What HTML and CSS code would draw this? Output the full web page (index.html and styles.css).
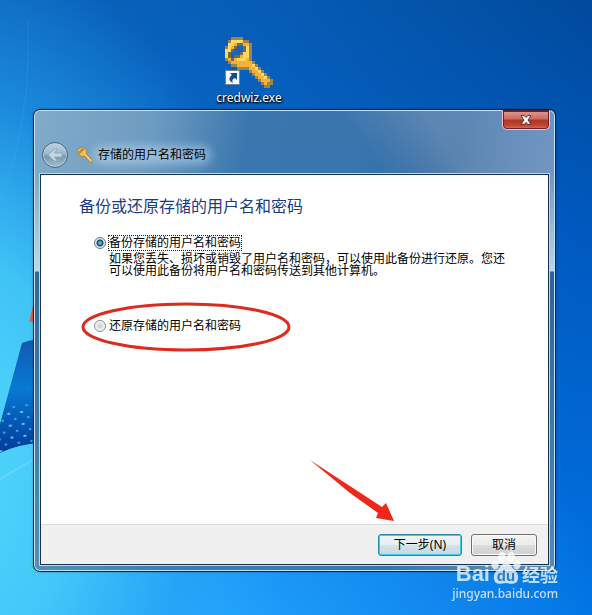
FILE: index.html
```html
<!DOCTYPE html>
<html lang="zh-CN">
<head>
  <meta charset="UTF-8">
  <meta name="viewport" content="width=device-width, initial-scale=1.0">
  <title>存储的用户名和密码</title>
  <link rel="stylesheet" href="styles.css">
</head>
<body>
  <div class="desktop">
    <!-- Wallpaper flag and light streaks -->
    <svg class="wallpaper" width="120" height="615" viewBox="0 0 120 615" aria-hidden="true">
      <defs>
        <linearGradient id="flag" x1="0" y1="0" x2="0" y2="1">
          <stop offset="0" stop-color="#1259ae"/>
          <stop offset="0.45" stop-color="#0879d2"/>
          <stop offset="1" stop-color="#003b96"/>
        </linearGradient>
        <pattern id="dots" width="13" height="12" patternUnits="userSpaceOnUse" patternTransform="rotate(-8)">
          <ellipse cx="3" cy="3" rx="1.7" ry="1" fill="#7dcaff"/>
          <ellipse cx="9" cy="9" rx="1.4" ry="0.9" fill="#57a9f0"/>
        </pattern>
      </defs>
      <path d="M28 20C30 90 22 150 -5 215" fill="none" stroke="#6cc4f5" stroke-opacity="0.15" stroke-width="1"/>
      <path d="M0 479L45 453" stroke="#9ae6ff" stroke-opacity="0.3" stroke-width="2"/>
      <path d="M29 322C32 311 35 296 41 284L50 284L44 320C39 321 34 321 29 322Z" fill="#e0603f"/>
      <path d="M22 343Q34 338 60 336L46 442Q18 444 0 453L0 424Z" fill="url(#flag)"/>
      <path d="M6 404L48 400L46 442Q18 444 0 453L0 424Z" fill="url(#dots)"/>
    </svg>

    <div class="shortcut">
      <svg width="52" height="52" viewBox="0 0 52 52" shape-rendering="crispEdges" aria-hidden="true">
        <!-- head and shaft, on a 3px grid -->
        <path fill="#a08348" d="M8 0h12v3h6v3h3v18h3v3h3v3h3v3h3v3h3v3h3v3h3v6h-3v3h-6v-3h-3v-3h-3v-3h-3v-3h-3v-3h-3v-3h-12v-3h-6v-3h-3v-3h-3v-15h3v-6h3z"/>
        <path fill="#f3b23a" d="M8 3h12v3h6v18h3v3h3v3h3v3h3v3h3v3h3v3h3v3h-3v3h-3v-3h-3v-3h-3v-3h-3v-3h-3v-3h-3v-3h-12v-3h-6v-3h-3v-15h3v-3h3z"/>
        <path fill="#ffd765" d="M8 3h12v3h-9v3h-3v6h-3v6h-3v-9h3v-6h3zM23 9h3v12h-3v3h-9v-3h6v-6h3zM29 27h3v3h3v3h3v3h3v3h3v3h-3v-3h-3v-3h-3v-3h-3v-3h-3z"/>
        <path fill="#7d6a3c" d="M14 6h6v3h3v6h-3v3h-3v3h-6v3h-3v-3h-3v-6h3v-3h3v-3h3z"/>
        <path fill="#1265bd" d="M14 9h6v6h-3v3h-6v3h-3v-6h3v-3h3z"/>
        <rect x="2" y="33" width="15" height="15" fill="#76818a"/>
        <rect x="3" y="34" width="13" height="13" fill="#f6fafc"/>
        <path shape-rendering="auto" fill="#174d8c" d="M7 36h7v7l-2-2c-3 1-3 3-2 5c-4-2-5-5-1-8z"/>
      </svg>
      <span class="shortcut-name">credwiz.exe</span>
    </div>

    <div class="window">
      <div class="titlebar">
        <button class="close-btn" type="button" aria-label="关闭">
          <svg width="12" height="10" viewBox="0 0 12 10" aria-hidden="true">
            <path d="M1 .7h3.3L6 2.6L7.7.7H11L8 5l3 4.3H7.7L6 7.4L4.3 9.3H1L4 5z" fill="#fff" stroke="#4d3441" stroke-width="1"/>
          </svg>
        </button>
        <button class="back-btn" type="button" aria-label="后退" disabled>
          <svg width="18" height="18" viewBox="0 0 18 18" aria-hidden="true">
            <path d="M2 9L8.5 3h3L8.5 7H16v4H8.5l3 4h-3z" fill="#c6d7e2" stroke="#8ba8bd" stroke-width="1"/>
          </svg>
        </button>
        <svg class="title-icon" width="16" height="16" viewBox="0 0 16 16" aria-hidden="true">
          <path fill="#f8c14e" stroke="#a8732d" stroke-width="0.8" fill-rule="evenodd" d="M3 .8h4l2.5 2.5v4l5.7 6l-.4 2h-1.5L8 9.4H4L.8 6.5V3zM4.5 2.5L2.4 4.6v2l3.2-2.7l1-1.4z"/>
          <path d="M9 8l5 5.5" stroke="#ffe49b" stroke-width="1"/>
        </svg>
        <span class="title-text">存储的用户名和密码</span>
      </div>

      <form class="page">
        <div class="page-body">
          <h1>备份或还原存储的用户名和密码</h1>
          <div class="option">
            <input type="radio" name="mode" id="backup" checked aria-describedby="backup-desc">
            <label class="focused" for="backup">备份存储的用户名和密码</label>
          </div>
          <p class="description" id="backup-desc">如果您丢失、损坏或销毁了用户名和密码，可以使用此备份进行还原。您还可以使用此备份将用户名和密码传送到其他计算机。</p>
          <div class="option">
            <input type="radio" name="mode" id="restore">
            <label for="restore">还原存储的用户名和密码</label>
            <svg class="ring" width="210" height="50" viewBox="0 0 210 50" aria-hidden="true">
              <ellipse cx="105" cy="25" rx="103" ry="23" fill="none" stroke="#dc2c20" stroke-width="3"/>
            </svg>
          </div>
        </div>
        <div class="page-footer">
          <svg class="arrow" width="86" height="63" viewBox="0 0 86 63" aria-hidden="true">
            <path d="M1 0L73 47L77 43L85 61L67 58L69 53L41 33Z" fill="#ef2718"/>
          </svg>
          <button class="btn btn-next" type="button">下一步(N)</button>
          <button class="btn btn-cancel" type="button">取消</button>
        </div>
      </form>
    </div>

    <div class="watermark">
      <div class="brand">
        <span class="brand-bai">Bai</span>
        <span class="paw">
          <svg width="32" height="34" viewBox="0 0 32 34" aria-hidden="true">
            <g fill="#fff">
              <ellipse cx="5" cy="14" rx="3.6" ry="4.6" transform="rotate(-12 5 14)"/>
              <ellipse cx="12" cy="6" rx="3.7" ry="5.2"/>
              <ellipse cx="21" cy="6" rx="3.7" ry="5.2" transform="rotate(8 21 6)"/>
              <ellipse cx="27" cy="14" rx="3.6" ry="4.6" transform="rotate(12 27 14)"/>
              <path d="M10 16C13 11 19 11 22 16C25 20 29 22 28 28C27 34 21 33 16 32C10 33 5 34 4 28C3 22 7 20 10 16Z"/>
            </g>
          </svg>
          <span class="paw-text">du</span>
        </span>
        <span class="brand-cn">经验</span>
      </div>
      <div class="site">jingyan.baidu.com</div>
    </div>
  </div>
</body>
</html>
```

FILE: styles.css
```css
* {
  box-sizing: border-box;
}

body {
  margin: 0;
  font-family: "Noto Sans", "Noto Sans CJK SC", sans-serif;
  font-size: 12px;
  color: #000;
}

button, input {
  font-family: inherit;
  font-size: inherit;
  margin: 0;
}

/* Desktop */
.desktop {
  position: relative;
  display: flex;
  flex-direction: column;
  min-height: 100vh;
  padding: 37px 36px 43px 33px;
  overflow: hidden;
  background:
    radial-gradient(ellipse 60% 85% at -10% 75%, #55dafc 0%, rgba(70, 205, 250, 0.9) 40%, rgba(45, 175, 245, 0.5) 70%, rgba(20, 130, 230, 0) 100%),
    radial-gradient(ellipse 70% 50% at 35% 105%, #22a4ff 0%, rgba(10, 130, 240, 0) 100%),
    linear-gradient(90deg, rgba(20, 125, 220, 0.5) 0%, rgba(15, 120, 220, 0.4) 45%, rgba(0, 60, 140, 0) 100%),
    linear-gradient(180deg, #004a9c 0%, #0058bc 35%, #0072e4 100%);
}

.wallpaper {
  position: absolute;
  left: 0;
  top: 0;
}

.shortcut {
  position: relative;
  display: flex;
  flex-direction: column;
  align-items: center;
  width: 88px;
  height: 72px;
  margin-left: 172px;
}

.shortcut-name {
  line-height: 18px;
  color: #fff;
  text-shadow: 0 1px 2px #000, 1px 1px 2px #000;
}

/* Window frame */
.window {
  position: relative;
  flex: 1;
  display: flex;
  flex-direction: column;
  padding: 0 4px 4px;
  border: 1px solid #0b263f;
  border-radius: 7px;
  box-shadow: inset 0 0 0 1px #c4e3f4, 0 0 2px rgba(0, 20, 60, 0.4);
  background:
    linear-gradient(180deg, rgba(255, 255, 255, 0) 64px, rgba(210, 232, 247, 0.75) 161px, rgba(22, 83, 135, 0.75) 162px, rgba(60, 130, 175, 0.6) 100%),
    linear-gradient(57deg, rgba(40, 102, 159, 0) 0 74%, rgba(122, 151, 188, 0.6) 84%, rgba(112, 151, 196, 0.8) 100%),
    linear-gradient(100deg, #82abc9 0%, #6d9cc2 20%, #3b77ae 36%, #3976ae 55%, #2c679f 72%, #7198c1 90%);
}

.titlebar {
  position: relative;
  display: flex;
  align-items: center;
  height: 64px;
  padding: 26px 0 0 4px;
}

.close-btn {
  position: absolute;
  top: 0;
  right: 1px;
  display: flex;
  align-items: center;
  justify-content: center;
  width: 48px;
  height: 20px;
  padding: 0;
  border: 1px solid #e4c6c8;
  border-top-color: #5b1c22;
  border-radius: 0 0 5px 5px;
  background: linear-gradient(180deg, #dc9c91 0%, #cb6a5c 45%, #b13322 50%, #c3452e 80%, #dd775f 100%);
  box-shadow: inset 0 0 0 1px #70202b;
}

.back-btn {
  display: flex;
  align-items: center;
  justify-content: center;
  width: 26px;
  height: 26px;
  padding: 0;
  border: 1px solid #476883;
  border-radius: 50%;
  background: linear-gradient(180deg, #c1d3df 0%, #9cb8cc 45%, #7697b0 55%, #a5c0d1 100%);
  box-shadow: inset 0 0 0 1px #bdd2df;
}

.title-icon {
  margin: 0 5px 0 9px;
}

.title-text {
  position: relative;
  z-index: 0;
  line-height: 18px;
}

/* Soft glow that keeps the caption readable on glass */
.title-text::before {
  content: "";
  position: absolute;
  z-index: -1;
  inset: 0 -5px;
  border-radius: 9px;
  background: rgba(207, 226, 241, 0.5);
  filter: blur(5px);
}

/* Wizard page */
.page {
  flex: 1;
  display: flex;
  flex-direction: column;
  border: 1px solid #17324d;
  box-shadow: 0 0 0 1px #b9d9ec;
  background: #fff;
  margin: 0 2px 2px;
}

.page-body {
  flex: 1;
  padding: 19px 38px 20px;
}

h1 {
  margin: 0 0 16px;
  font-size: 16px;
  font-weight: 400;
  line-height: 24px;
  color: #173c85;
}

.option {
  position: relative;
  display: flex;
  align-items: center;
  gap: 2px;
  height: 18px;
  padding-left: 15px;
}

.option input {
  appearance: none;
  width: 12px;
  height: 12px;
  border: 1px solid #858b92;
  border-radius: 50%;
  background: radial-gradient(circle, #c8cbce 0%, #e4e5e6 45%, #fff 75%);
}

.option input:checked {
  border-color: #607487;
  background: radial-gradient(circle, #55bddd 0 1px, #103b59 3px, #e5edf2 4px);
}

.option label {
  line-height: 14px;
  border: 1px dotted transparent;
}

.option .focused {
  border-color: #222;
}

.description {
  margin: 1px 0 40px;
  padding-left: 30px;
  line-height: 12px;
}

.ring {
  position: absolute;
  left: 2px;
  top: -15px;
}

.page-footer {
  position: relative;
  display: flex;
  align-items: center;
  justify-content: flex-end;
  gap: 9px;
  height: 40px;
  padding-right: 11px;
  border-top: 1px solid #dcdcdc;
  background: #f0f0f0;
}

.arrow {
  position: absolute;
  right: 153px;
  bottom: 41px;
}

.btn {
  height: 22px;
  padding: 0;
  line-height: 18px;
  color: #000;
  border: 1px solid #707070;
  border-radius: 3px;
  background: linear-gradient(180deg, #f3f3f3 0%, #ebebeb 48%, #dcdcdc 52%, #cfcfcf 100%);
  box-shadow: inset 0 0 0 1px #fafafa;
}

.btn-next {
  width: 84px;
  border-color: #278bad;
  background: linear-gradient(180deg, #f0f5f7 0%, #e5eff3 48%, #d5e3ea 52%, #c7d8e1 100%);
  box-shadow: inset 0 0 0 1px #43c8ed;
}

.btn-cancel {
  width: 66px;
}

/* Watermark over the corner of the window */
.watermark {
  position: absolute;
  right: 34px;
  bottom: 12px;
  color: #fff;
  opacity: 0.75;
}

.brand {
  display: flex;
  align-items: flex-end;
  justify-content: flex-end;
  height: 34px;
}

.brand-bai {
  font-family: "Liberation Sans", sans-serif;
  font-size: 22px;
  font-weight: 700;
  line-height: 22px;
}

.paw {
  position: relative;
  height: 34px;
}

.paw-text {
  position: absolute;
  left: 0;
  right: 0;
  bottom: 1px;
  font-family: "Liberation Sans", sans-serif;
  font-size: 15px;
  font-weight: 700;
  line-height: 16px;
  text-align: center;
  color: #397eb7;
}

.brand-cn {
  font-family: "Noto Sans CJK SC", sans-serif;
  font-size: 18px;
  font-weight: 700;
  line-height: 22px;
}

.site {
  font-size: 12px;
  font-weight: 500;
  line-height: 18px;
}
```
